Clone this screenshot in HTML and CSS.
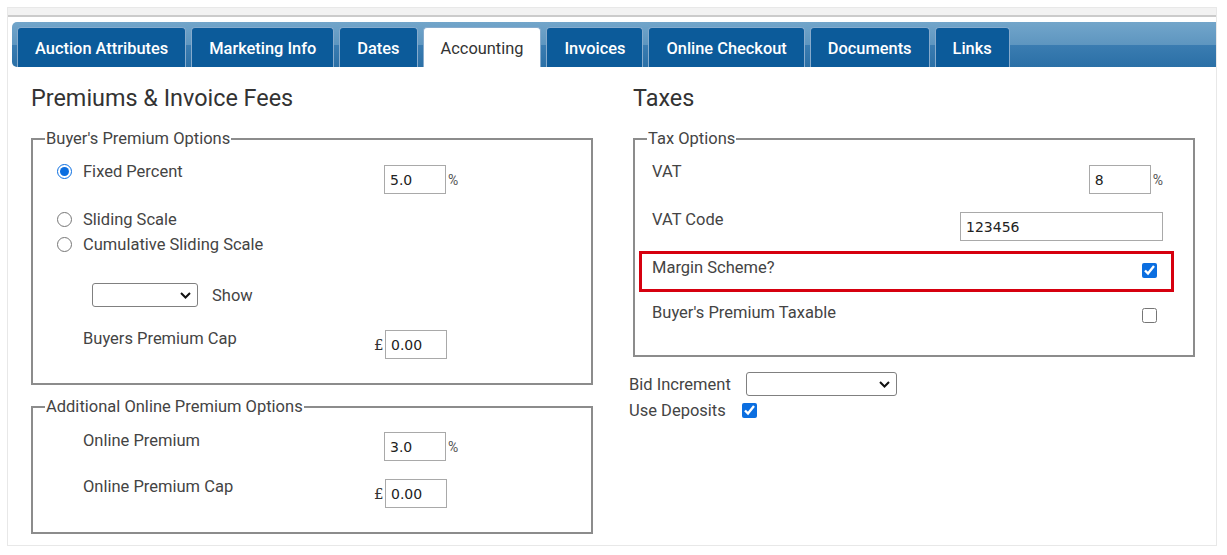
FILE: index.html
```html
<!DOCTYPE html>
<html lang="en">
<head>
    <meta charset="UTF-8">
    <meta name="viewport" content="width=device-width, initial-scale=1.0">
    <title>Auction - Accounting</title>
    <link rel="stylesheet" href="styles.css">
</head>
<body>
    <div class="frame">
        <div class="top-strip"></div>

        <ul class="tabs">
            <li class="tab">Auction Attributes</li>
            <li class="tab">Marketing Info</li>
            <li class="tab">Dates</li>
            <li class="tab active">Accounting</li>
            <li class="tab">Invoices</li>
            <li class="tab">Online Checkout</li>
            <li class="tab">Documents</li>
            <li class="tab">Links</li>
        </ul>

        <div class="content">
            <div class="column">
                <h2>Premiums &amp; Invoice Fees</h2>

                <fieldset class="box">
                    <legend>Buyer's Premium Options</legend>

                    <div class="row radio-row gap-first">
                        <input type="radio" name="premium" checked>
                        <span class="label">Fixed Percent</span>
                        <span class="value drop-3">
                            <input class="num" type="text" value="5.0"><span class="unit">%</span>
                        </span>
                    </div>
                    <div class="row radio-row gap-16">
                        <input type="radio" name="premium">
                        <span class="label">Sliding Scale</span>
                    </div>
                    <div class="row radio-row gap-6">
                        <input type="radio" name="premium">
                        <span class="label">Cumulative Sliding Scale</span>
                    </div>

                    <div class="row select-row">
                        <span class="select-wrap small">
                            <select></select>
                            <svg class="chevron" width="11" height="7" viewBox="0 0 11 7"><path d="M1 1l4.5 4.5L10 1" fill="none" stroke="#111" stroke-width="2"/></svg>
                        </span>
                        <span class="show">Show</span>
                    </div>

                    <div class="row plain-row gap-22">
                        <span class="label">Buyers Premium Cap</span>
                        <span class="value money drop-1">
                            <span class="currency">£</span><input class="num" type="text" value="0.00">
                        </span>
                    </div>
                </fieldset>

                <fieldset class="box second">
                    <legend>Additional Online Premium Options</legend>

                    <div class="row plain-row gap-online">
                        <span class="label">Online Premium</span>
                        <span class="value drop-1">
                            <input class="num" type="text" value="3.0"><span class="unit">%</span>
                        </span>
                    </div>
                    <div class="row plain-row gap-16">
                        <span class="label">Online Premium Cap</span>
                        <span class="value money drop-2">
                            <span class="currency">£</span><input class="num" type="text" value="0.00">
                        </span>
                    </div>
                </fieldset>
            </div>

            <div class="column right">
                <h2>Taxes</h2>

                <fieldset class="box tax-box">
                    <legend>Tax Options</legend>

                    <div class="tax-row gap-first">
                        <span class="label">VAT</span>
                        <span class="value drop-3 to-edge">
                            <input class="num" type="text" value="8"><span class="unit">%</span>
                        </span>
                    </div>
                    <div class="tax-row gap-16">
                        <span class="label">VAT Code</span>
                        <input class="code drop-2 to-edge" type="text" value="123456">
                    </div>
                    <div class="tax-row marked">
                        <span class="label">Margin Scheme?</span>
                        <input class="check" type="checkbox" checked>
                    </div>
                    <div class="tax-row gap-11">
                        <span class="label">Buyer's Premium Taxable</span>
                        <input class="check to-check" type="checkbox">
                    </div>
                </fieldset>

                <div class="extras">
                    <span class="label">Bid Increment</span>
                    <span class="select-wrap wide">
                        <select></select>
                        <svg class="chevron" width="11" height="7" viewBox="0 0 11 7"><path d="M1 1l4.5 4.5L10 1" fill="none" stroke="#111" stroke-width="2"/></svg>
                    </span>
                    <span class="label">Use Deposits</span>
                    <span><input class="check" type="checkbox" checked></span>
                </div>
            </div>
        </div>
    </div>
</body>
</html>
```

FILE: styles.css
```css
body {
    margin: 0;
    font-family: Roboto, "Liberation Sans", Arial, sans-serif;
    background-color: #fff;
    color: #444;
}

.frame {
    margin: 7px 0 0 7px;
    width: 1210px;
    height: 539px;
    border: 1px solid #e8e8e8;
    box-sizing: border-box;
}

.top-strip {
    height: 7px;
    background-color: #f2f2f2;
    border-bottom: 2px solid #cbcbcb;
}

/* tab bar */
.tabs {
    list-style: none;
    display: flex;
    align-items: flex-end;
    height: 45px;
    margin: 5px 0 0 4px;
    padding: 0 0 0 5px;
    box-sizing: border-box;
    border-radius: 5px 0 0 5px;
    background: linear-gradient(#72a5ca 0%, #5e96c0 50%, #3a7cb1 52%, #2b70a6 100%);
}

.tab {
    height: 40px;
    line-height: 42px;
    padding: 0 17px;
    margin-right: 5px;
    border: 1px solid #86abcd;
    border-bottom: none;
    border-radius: 4px 4px 0 0;
    background-color: #0c5b9a;
    color: #fff;
    font-size: 16.4px;
    font-weight: 500;
    box-sizing: border-box;
}

.tab.active {
    background-color: #fff;
    color: #333;
    font-weight: 400;
}

/* page body */
.content {
    display: flex;
    gap: 40px;
    padding: 18px 0 0 23px;
}

.column {
    width: 562px;
}

h2 {
    margin: 0 0 17px 0;
    font-size: 23.4px;
    line-height: 27px;
    font-weight: 400;
    color: #333;
}

.box {
    margin: 0;
    padding: 0 0 24px 0;
    border: 2px solid #8c8c8c;
}

.box legend {
    margin-left: 12px;
    padding: 0 1px;
    font-size: 16.5px;
    line-height: 19px;
    color: #444;
}

.box.second {
    margin-top: 12px;
}

.label {
    font-size: 16.5px;
    line-height: 19px;
}

.row {
    display: flex;
    align-items: flex-start;
}

.radio-row {
    padding-left: 24px;
}

.radio-row input[type="radio"] {
    width: 15px;
    height: 15px;
    margin: 2px 11px 0 0;
    accent-color: #0b6ee0;
}

.radio-row .label,
.plain-row .label {
    width: 301px;
}

.plain-row {
    padding-left: 50px;
}

.value {
    display: flex;
    align-items: center;
}

.money {
    margin-left: -10px;
}

.currency {
    width: 11px;
    font-family: "DejaVu Serif", serif;
    font-size: 15px;
    color: #333;
}

.unit {
    margin-left: 2px;
    font-size: 14px;
    color: #555;
}

.num,
.code {
    height: 29px;
    padding: 0 5px;
    border: 1px solid #a9a9a9;
    box-sizing: border-box;
    font-family: "DejaVu Sans", Verdana, sans-serif;
    font-size: 14px;
    color: #222;
}

.num {
    width: 62px;
}

.code {
    width: 203px;
}

.select-row {
    padding-left: 59px;
    margin-top: 29px;
    align-items: center;
}

.select-wrap {
    position: relative;
    display: inline-block;
}

.select-wrap select {
    appearance: none;
    height: 24px;
    border: 1px solid #808080;
    border-radius: 3px;
    background-color: #fff;
    display: block;
}

.select-wrap.small select {
    width: 106px;
}

.select-wrap.wide select {
    width: 151px;
}

.chevron {
    position: absolute;
    right: 7px;
    top: 9px;
}

.show {
    margin-left: 14px;
    font-size: 16.5px;
    color: #444;
}

.gap-first { margin-top: 14px; }
.gap-online { margin-top: 15px; }
.gap-16 { margin-top: 16px; }
.gap-6 { margin-top: 6px; }
.gap-22 { margin-top: 22px; }
.gap-11 { margin-top: 11px; }

.drop-1 { margin-top: 1px; }
.drop-2 { margin-top: 2px; }
.drop-3 { margin-top: 3px; }

/* taxes */
.tax-box {
    padding-bottom: 32px;
}

.tax-row {
    display: flex;
    align-items: flex-start;
    padding-left: 17px;
}

.tax-row .label {
    flex: 1;
}

.check {
    width: 15px;
    height: 15px;
    margin: 5px 0 0 0;
    accent-color: #0b6ee0;
}

.to-edge {
    margin-right: 30px;
}

.tax-row .to-check {
    margin-right: 36px;
}

.tax-row.marked {
    margin: 10px 19px 0 4px;
    padding: 4px 14px 11px 10px;
    border: 3px solid #d6000f;
}

.extras {
    display: grid;
    grid-template-columns: 113px auto;
    justify-content: start;
    align-items: center;
    row-gap: 5px;
    margin: 15px 0 0 -4px;
}

.extras .select-wrap {
    margin-left: 4px;
}

.extras .check {
    margin: 0;
    display: block;
    align-self: start;
}
```
